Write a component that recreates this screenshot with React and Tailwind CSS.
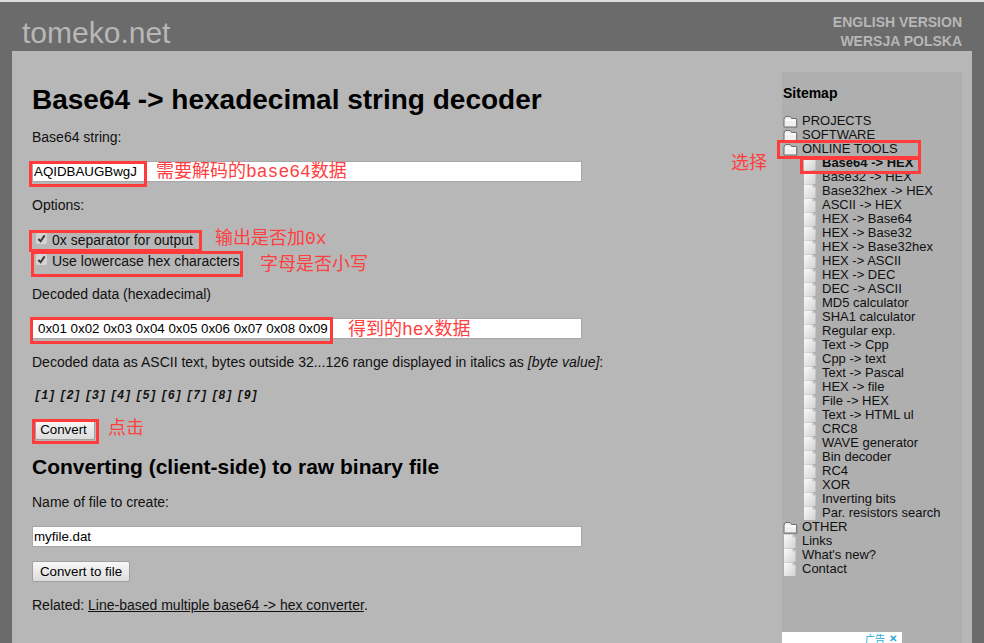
import React from "react";

const TOOLS = [
  "Base32 -> HEX",
  "Base32hex -> HEX",
  "ASCII -> HEX",
  "HEX -> Base64",
  "HEX -> Base32",
  "HEX -> Base32hex",
  "HEX -> ASCII",
  "HEX -> DEC",
  "DEC -> ASCII",
  "MD5 calculator",
  "SHA1 calculator",
  "Regular exp.",
  "Text -> Cpp",
  "Cpp -> text",
  "Text -> Pascal",
  "HEX -> file",
  "File -> HEX",
  "Text -> HTML ul",
  "CRC8",
  "WAVE generator",
  "Bin decoder",
  "RC4",
  "XOR",
  "Inverting bits",
  "Par. resistors search",
];

const BYTES = [1, 2, 3, 4, 5, 6, 7, 8, 9];

function FolderIcon() {
  return (
    <svg width="15" height="14" viewBox="0 0 15 14" className="shrink-0">
      <path d="M1 5 L2.5 2.5 H7 L8.5 4.5 H13.5 V13 H1 Z" fill="#f0f0f0" stroke="#6e6e6e" strokeWidth="1" />
      <path d="M2 5.5 H13 V7 H2 Z" fill="#ffffff" />
      <path d="M14 5 V13.5 H2" fill="none" stroke="#8a8a8a" strokeWidth="1" />
    </svg>
  );
}

function DocIcon() {
  return (
    <svg width="12" height="14" viewBox="0 0 12 14" className="shrink-0">
      <defs>
        <linearGradient id="docFill" x1="0" y1="0" x2="1" y2="1">
          <stop offset="0" stopColor="#fbfbfb" />
          <stop offset="1" stopColor="#d2d2d2" />
        </linearGradient>
      </defs>
      <path d="M0 0.5 H8.5 L11.5 3.5 V14 H0 Z" fill="url(#docFill)" />
      <path d="M8.5 0.5 L11.5 3.5 H8.5 Z" fill="#c4c4c4" />
    </svg>
  );
}

function FolderRow({ label }) {
  return (
    <div className="flex h-[14px] items-center gap-[4px] pl-[1px]">
      <FolderIcon />
      <span>{label}</span>
    </div>
  );
}

function DocRow({ label, bold, nested }) {
  return (
    <div className={`flex h-[14px] items-center gap-[6px] ${nested ? "pl-[22px]" : "pl-[2px]"}`}>
      <DocIcon />
      <span className={bold ? "font-bold" : ""}>{label}</span>
    </div>
  );
}

function TextField({ value }) {
  return (
    <input
      readOnly
      value={value}
      className="block h-[21px] w-[550px] border border-[#a8a8a8] bg-white px-[1px] text-[13.33px] text-black outline-none"
    />
  );
}

function CheckOption({ label }) {
  return (
    <label className="flex h-[21px] items-center gap-[5px] pl-[4px]">
      <span className="-mt-[2px] flex h-[11px] w-[11px] items-center justify-center rounded-[2px] bg-[#d4d4d4]">
        <svg width="9" height="9" viewBox="0 0 10 10">
          <path d="M1.5 5.5 L4 8 L8.5 1.5" fill="none" stroke="#3a3a3a" strokeWidth="2.2" />
        </svg>
      </span>
      {label}
    </label>
  );
}

function GrayButton({ children, className = "" }) {
  return (
    <button
      type="button"
      className={`block h-[21px] rounded-[2px] border border-[#a0a0a0] bg-gradient-to-b from-[#f8f8f8] to-[#dcdcdc] text-[13.33px] text-black ${className}`}
    >
      {children}
    </button>
  );
}

// red notes drawn on top of the page in the screenshot
function Annotations() {
  const note = "absolute whitespace-nowrap text-[18px] leading-[20px] text-[#ff4040] font-['Liberation_Mono','Noto_Sans_CJK_SC',monospace]";
  const box = "absolute border-[3px] border-[#ff3b3b]";
  return (
    <>
      <div className={`${box} left-[29px] top-[159px] h-[26px] w-[118px]`} />
      <div className={`${box} left-[29px] top-[228px] h-[22px] w-[173px]`} />
      <div className={`${box} left-[31px] top-[249px] h-[26px] w-[212px]`} />
      <div className={`${box} left-[30px] top-[315px] h-[27px] w-[303px]`} />
      <div className={`${box} left-[32px] top-[417px] h-[25px] w-[67px]`} />
      <div className={`${box} left-[777px] top-[138px] h-[19px] w-[144px]`} />
      <div className={`${box} left-[800px] top-[155px] h-[17px] w-[121px]`} />
      <span className={`${note} left-[156px] top-[160px]`}>需要解码的base64数据</span>
      <span className={`${note} left-[215px] top-[227px]`}>输出是否加0x</span>
      <span className={`${note} left-[260px] top-[253px]`}>字母是否小写</span>
      <span className={`${note} left-[348px] top-[318px]`}>得到的hex数据</span>
      <span className={`${note} left-[108px] top-[417px]`}>点击</span>
      <span className={`${note} left-[731px] top-[152px]`}>选择</span>
    </>
  );
}

export default function App() {
  return (
    <div className="relative flex h-[643px] w-[984px] flex-col overflow-hidden border-t-2 border-[#dedede] bg-[#6b6b6b] font-['Liberation_Sans',Arial,sans-serif] text-[14px] leading-[16px] text-[#111]">
      <header className="flex h-[49px] shrink-0 items-start justify-between pl-[22px] pr-[22px] text-[#b7b7b7]">
        <div className="pt-[14px] text-[30px] leading-[34px]">tomeko.net</div>
        <div className="pt-[11px] text-right font-bold leading-[19px]">
          <div>ENGLISH VERSION</div>
          <div>WERSJA POLSKA</div>
        </div>
      </header>

      <div className="mx-[12px] flex min-h-0 flex-1 justify-between bg-[#b7b7b7] pl-[20px] pr-[10px] pt-[21px]">
        <main className="w-[550px]">
          <h1 className="mt-[12px] text-[28px] font-bold leading-[32px] text-black">
            Base64 -&gt; hexadecimal string decoder
          </h1>
          <p className="mt-[13px]">Base64 string:</p>
          <div className="mt-[16px]">
            <TextField value="AQIDBAUGBwgJ" />
          </div>
          <p className="mt-[15px]">Options:</p>
          <div className="mt-[16px]">
            <CheckOption label="0x separator for output" />
            <CheckOption label="Use lowercase hex characters" />
          </div>
          <p className="mt-[15px]">Decoded data (hexadecimal)</p>
          <div className="mt-[16px]">
            <input
              readOnly
              value="0x01 0x02 0x03 0x04 0x05 0x06 0x07 0x08 0x09"
              className="block h-[21px] w-[550px] border border-[#a8a8a8] bg-white pl-[5px] text-[13.33px] text-black outline-none"
            />
          </div>
          <p className="mt-[15px] whitespace-nowrap">
            Decoded data as ASCII text, bytes outside 32...126 range displayed in italics as <i>[byte value]</i>:
          </p>
          <p className="mt-[16px] pl-[2px]">
            {BYTES.map((n) => (
              <React.Fragment key={n}>
                <i className="font-['Liberation_Mono',monospace] text-[11.9px] font-bold">[{n}]</i>{" "}
              </React.Fragment>
            ))}
          </p>
          <GrayButton className="ml-[3px] mt-[15px] w-[60px] pr-[3px]">Convert</GrayButton>
          <h2 className="mt-[15px] text-[21px] font-bold leading-[24px] text-black">
            Converting (client-side) to raw binary file
          </h2>
          <p className="mt-[15px]">Name of file to create:</p>
          <div className="mt-[16px]">
            <TextField value="myfile.dat" />
          </div>
          <GrayButton className="mt-[14px] w-[98px]">Convert to file</GrayButton>
          <p className="mt-[15px]">
            Related: <a className="underline">Line-based multiple base64 -&gt; hex converter</a>.
          </p>
        </main>

        <aside className="relative w-[180px] bg-[#afafaf] pl-[1px] pt-[13px]">
          <div className="font-bold text-black">Sitemap</div>
          <div className="-ml-[1px] mt-[13px] text-[13px] leading-[14px]">
            <FolderRow label="PROJECTS" />
            <FolderRow label="SOFTWARE" />
            <FolderRow label="ONLINE TOOLS" />
            <DocRow nested bold label="Base64 -> HEX" />
            {TOOLS.map((t) => (
              <DocRow nested key={t} label={t} />
            ))}
            <FolderRow label="OTHER" />
            <DocRow label="Links" />
            <DocRow label="What's new?" />
            <DocRow label="Contact" />
          </div>
          <div className="absolute bottom-0 left-0 flex h-[11px] w-[120px] items-start justify-end gap-[4px] overflow-hidden bg-white pr-[5px] text-[10px] leading-[14px] text-[#26a9d6]">
            <span className="font-['Noto_Sans_CJK_SC',sans-serif]">广告</span>
            <span className="font-bold">✕</span>
          </div>
        </aside>
      </div>

      <Annotations />
    </div>
  );
}
